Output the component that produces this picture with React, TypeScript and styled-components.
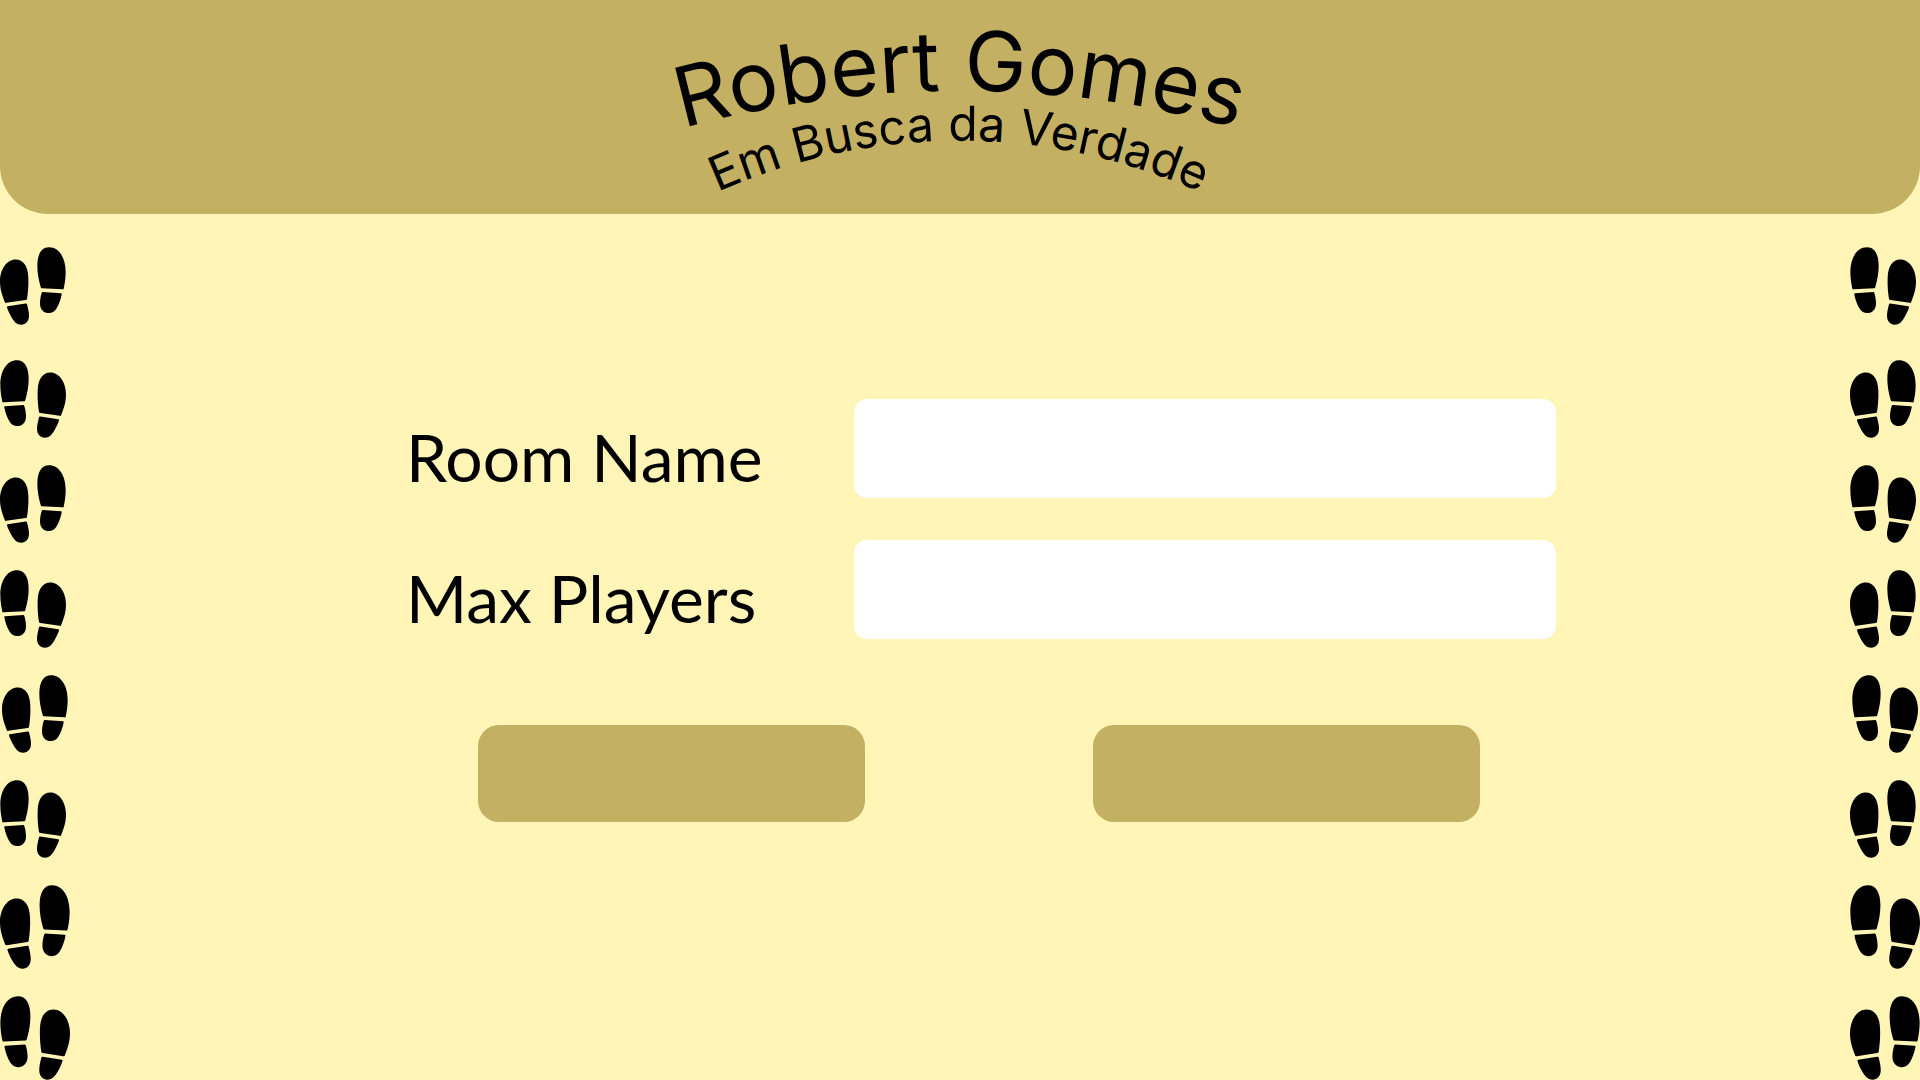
import React from "react";
import styled, { createGlobalStyle } from "styled-components";

const GlobalStyle = createGlobalStyle`
  *, *::before, *::after { box-sizing: border-box; }
  body { margin: 0; background: #fff5b7; color: #000; font-family: Lato, "Open Sans", sans-serif; }
`;

const Page = styled.div`
  min-height: 100vh;
  display: flex;
  flex-direction: column;
`;

const Header = styled.header`
  display: flex;
  justify-content: center;
  background: #c4b062;
  border-radius: 0 0 48px 48px;
`;

const Title = styled.h1`
  margin: 0;
  font-weight: 400;
`;

const Banner = styled.svg`
  display: block;
  width: 640px;
  height: 214px;
  overflow: visible;
`;

const ArcText = styled.text<{ $size: number }>`
  font-family: Inter, Lato, sans-serif;
  font-weight: 400;
  font-size: ${(p) => p.$size}px;
  text-anchor: middle;
`;

const Body = styled.div`
  flex: 1;
  display: flex;
`;

const Trail = styled.div`
  flex: none;
  width: 70px;
  padding-top: 33px;
  display: flex;
  flex-direction: column;
  gap: 27px;
`;

const Print = styled.svg<{ $large: boolean; $mirrored: boolean; $first: boolean; $inset: boolean }>`
  display: block;
  width: ${(p) => (p.$large ? 70 : 66)}px;
  height: ${(p) => (p.$large ? 84 : 78)}px;
  margin-bottom: ${(p) => (p.$first ? 8 : 0)}px;
  margin-left: ${(p) => (p.$inset ? 2 : 0)}px;
  transform: ${(p) => (p.$mirrored ? "scaleX(-1)" : "none")};
`;

const Main = styled.main`
  flex: 1;
  display: flex;
  justify-content: center;
  align-items: flex-start;
  padding: 185px 0 0 42px;
`;

const Form = styled.form`
  width: 100%;
  max-width: 1150px;
  display: grid;
  gap: 42px;
`;

const Row = styled.div`
  display: grid;
  grid-template-columns: 448px 1fr;
`;

const Label = styled.label`
  padding-top: 18px;
  font-size: 66px;
  line-height: 80px;
`;

const Field = styled.input`
  width: 100%;
  height: 99px;
  padding: 0 24px;
  border: 0;
  border-radius: 13px;
  background: #fff;
  font: inherit;
  font-size: 48px;
`;

const Actions = styled.div`
  display: flex;
  justify-content: space-between;
  padding: 44px 76px 0 72px;
`;

const Button = styled.button`
  width: 387px;
  height: 97px;
  border: 0;
  border-radius: 21px;
  background: #c4b062;
  cursor: pointer;
`;

const STEPS = [0, 1, 2, 3, 4, 5, 6, 7];

function Footprints({ index, mirrored }: { index: number; mirrored: boolean }) {
  return (
    <Print
      viewBox="0 0 198 236"
      preserveAspectRatio="none"
      aria-hidden="true"
      $large={index > 5}
      $mirrored={mirrored}
      $first={index === 0}
      $inset={index === 4}
    >
      <path d="M15 168C6 145 0 128 0 104C0 68 20 38 47 38C70 38 84 58 85 92C86 118 84 138 81 157Q80 160 77 160L19 169Q16 170 15 168Z" />
      <path d="M21 182Q20 180 23 179L77 171Q80 170 81 173C84 185 87 197 87 208C87 225 77 235 64 235C50 235 42 225 35 213C28 201 23 190 21 182Z" />
      <path d="M125 125Q123 125 122 121C116 100 112 80 112 57C112 22 124 1 147 1C177 1 197 32 197 76C197 95 194 113 191 126Q190 129 187 128Z" />
      <path d="M128 136L183 140Q186 140 185 144C182 160 176 176 169 187C163 196 156 200 147 200C131 200 120 189 120 170C120 160 122 149 125 139Q126 136 128 136Z" />
    </Print>
  );
}

export default function App() {
  return (
    <>
      <GlobalStyle />
      <Page>
        <Header>
          <Title>
            <Banner viewBox="0 0 640 214">
              <defs>
                <path id="arc-name" d="M20 135A1038 1038 0 0 1 620 135" />
                <path id="arc-subtitle" d="M49 206A590 590 0 0 1 589 206" />
              </defs>
              <ArcText $size={83}>
                <textPath href="#arc-name" startOffset="50%">Robert Gomes</textPath>
              </ArcText>
              <ArcText $size={48}>
                <textPath href="#arc-subtitle" startOffset="50%">Em Busca da Verdade</textPath>
              </ArcText>
            </Banner>
          </Title>
        </Header>
        <Body>
          <Trail>
            {STEPS.map((i) => (
              <Footprints key={i} index={i} mirrored={i % 2 === 1} />
            ))}
          </Trail>
          <Main>
            <Form onSubmit={(e) => e.preventDefault()}>
              <Row>
                <Label htmlFor="room-name">Room Name</Label>
                <Field id="room-name" type="text" />
              </Row>
              <Row>
                <Label htmlFor="max-players">Max Players</Label>
                <Field id="max-players" type="text" inputMode="numeric" />
              </Row>
              <Actions>
                <Button type="button" aria-label="Back" />
                <Button type="submit" aria-label="Create room" />
              </Actions>
            </Form>
          </Main>
          <Trail>
            {STEPS.map((i) => (
              <Footprints key={i} index={i} mirrored={i % 2 === 0} />
            ))}
          </Trail>
        </Body>
      </Page>
    </>
  );
}
